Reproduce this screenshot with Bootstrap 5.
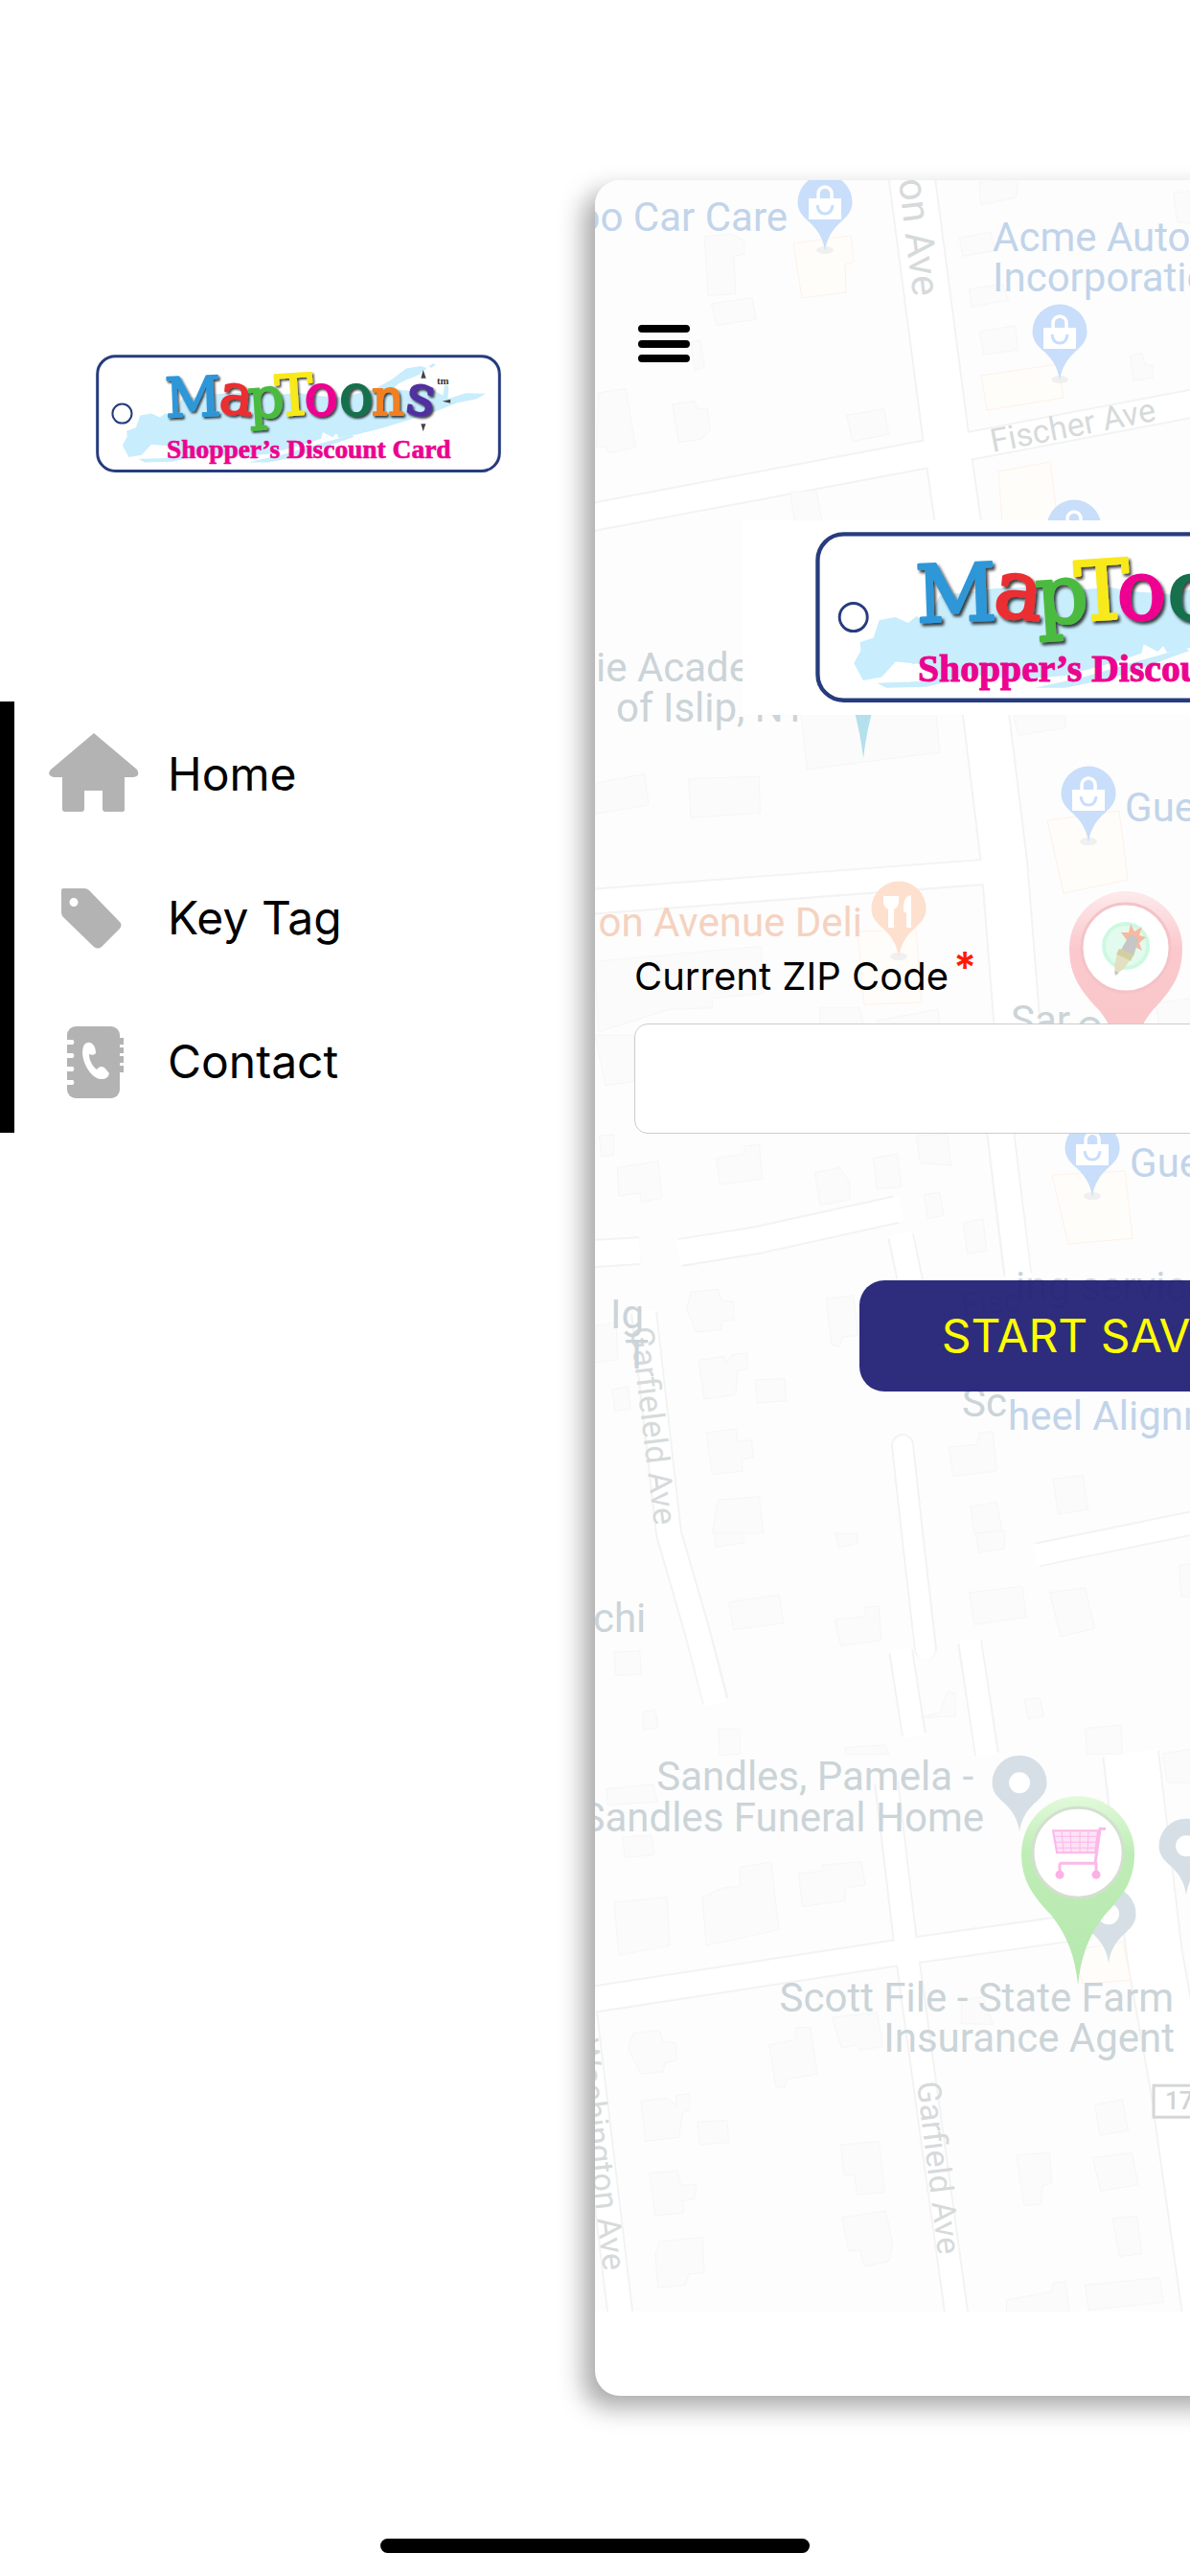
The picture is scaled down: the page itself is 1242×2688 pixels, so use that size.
<!DOCTYPE html>
<html lang="en">
<head>
<meta charset="utf-8">
<meta name="viewport" content="width=device-width, initial-scale=1">
<title>MapToons Shopper's Discount Card</title>
<link href="https://cdn.jsdelivr.net/npm/bootstrap@5.3.0/dist/css/bootstrap.min.css" rel="stylesheet">
<style>
  body { font-family: Inter, "Liberation Sans", sans-serif; color: #000; background: #fff; }
  .shell { padding-top: 188px; }
  .brand { padding: 182px 98px 0 100px; }
  .side-menu { margin-top: 238px; border-left: 15px solid #000; }
  .side-menu a { height: 150px; padding: 2px 0 0 36px; gap: 28px; font-size: 48px; color: #000; }
  .side-menu svg { width: 96px; height: 96px; fill: #b3b3b3; }
  .sheet { width: 86vw; padding: 151px 41px 0; border-radius: 26px; background: #fff; box-shadow: -12px 12px 26px rgba(0,0,0,.34); }
  .sheet-map { top: 0; left: 0; border-radius: 26px 26px 0 0; }
  .burger { margin-left: 4px; width: 54px; height: 39px; }
  .burger span { height: 8px; border-radius: 4px; background: #000; }
  .hero { margin: 165px auto 0; padding-left: 4px; width: 760px; height: 203px; background: #fff; }
  .hero svg { width: 612px; }
  .zip-label { margin-top: 245px; font-size: 40px; line-height: 56px; }
  .zip-label sup { color: #ff1a00; font-size: 44px; font-weight: 600; line-height: 40px; top: -8px; margin-left: -6px; }
  .zip-input { margin-top: 21px; height: 115px; border: 1px solid #ccc; border-radius: 14px; font-size: 40px; }
  .start { margin: 153px auto 0; width: 516px; height: 116px; border-radius: 26px; background: rgba(35,33,118,.95); color: #ff0; font-size: 48px; }
  .start:hover { background: #232176; color: #ff0; }
  .foot { height: 188px; padding-bottom: 24px; }
  .foot span { width: 36%; height: 15px; border-radius: 8px; background: #000; }
  .place { font-family: Roboto, sans-serif; font-size: 42px; }
  .road { font-family: Roboto, sans-serif; font-size: 34px; fill: #d6dada; }
  .road .wide { font-size: 41px; }
  .bl { fill: #c1d4ea; } .gr { fill: #cbd4d8; } .or { fill: #f5d2c0; }
  .bld path { fill: #fbfbfb; stroke: #f6f6f6; vector-effect: non-scaling-stroke; }
  .shop path { fill: #fffdfa; stroke: #fef2e8; vector-effect: non-scaling-stroke; }
</style>
</head>
<body>
<svg width="0" height="0" class="position-absolute" aria-hidden="true">
  <defs>
    <filter id="emboss" x="-10%" y="-10%" width="120%" height="130%">
      <feDropShadow dx="5" dy="6" stdDeviation="3" flood-color="#000" flood-opacity=".75"/>
    </filter>
    <symbol id="keytag" viewBox="62 62 1264 370">
      <rect x="67" y="67" width="1254" height="358" rx="56" fill="#fff" stroke="#263c7e" stroke-width="9"/>
      <path fill="#c8edfc" d="M145 345L160 318L158 300L187 290L200 252L235 246L262 258L280 244L300 260L330 200L450 184L560 180L640 186L700 182L740 190L830 196L930 170L985 140L1030 105L1075 98L1095 104L1070 125L1010 150L985 170L1040 175L1100 165L1145 190L1150 155L1162 160L1160 200L1215 182L1278 184L1250 200L1190 212L1120 240L1040 265L960 290L880 310L820 322L812 308L800 320L770 304L765 324L700 345L600 372L500 380L400 370L350 380L300 372L270 345L235 342L205 375L165 382Z"/>
      <path fill="#c8edfc" d="M195 388L290 384L330 375L360 382L300 396L215 398ZM535 398L640 375L760 340L860 312L868 318L780 350L700 378L600 398ZM1100 98L1115 90L1122 94L1108 104Z"/>
      <path fill="#fff" d="M1015 150L1035 138L1055 160L1030 166ZM240 375Q265 335 295 350T330 375L260 386Z"/>
      <circle cx="144" cy="246" r="30" fill="#fff" stroke="#263c7e" stroke-width="6"/>
      <g filter="url(#emboss)" font-family="'DejaVu Serif', serif" font-size="176" stroke-width="6" stroke-linejoin="round">
        <text x="278" y="254" fill="#2f97d8" stroke="#2f97d8" font-size="170" transform="rotate(-2 360 190)">M</text>
        <text x="448" y="248" fill="#ea2f32" stroke="#ea2f32" transform="rotate(6 500 200)">a</text>
        <text x="538" y="258" fill="#4bbb40" stroke="#4bbb40" transform="rotate(-4 590 220)">p</text>
        <text x="622" y="250" fill="#f8e91a" stroke="#f8e91a" transform="rotate(-4 680 180)">T</text>
        <text x="712" y="250" fill="#ee0290" stroke="#ee0290">o</text>
        <text x="821" y="250" fill="#14704c" stroke="#14704c">o</text>
        <text x="922" y="249" fill="#f08022" stroke="#f08022" font-size="158">n</text>
        <text x="1030" y="250" fill="#5130a0" stroke="#5130a0" transform="rotate(8 1075 205)">s</text>
      </g>
      <path fill="#444" d="M1083 110L1092 136H1076ZM1083 302L1091 278H1076ZM1143 208L1168 202V214Z"/>
      <text x="1126" y="154" font-family="'Liberation Serif', serif" font-size="32" font-weight="700" fill="#333">tm</text>
      <text x="283" y="385" font-family="'Liberation Serif', serif" font-size="82" font-weight="700" fill="#ec0390" stroke="#ec0390" stroke-width="2">Shopper’s Discount Card</text>
    </symbol>
    <path id="drop" d="M0 0C-2 -14 -8 -22 -15 -29C-24 -37 -28.500 -42 -28.500 -51A28.500 28.500 0 0 1 28.500 -51C28.500 -42 24 -37 15 -29C8 -22 2 -14 0 0Z"/>
    <g id="bagpin">
      <ellipse cy="-1" rx="9" ry="4" fill="#f0f0f0"/>
      <use href="#drop" fill="#c8defa"/>
      <path fill="#fff" d="M-17 -55H17V-33H-17Z"/>
      <path fill="none" stroke="#fff" stroke-width="3.500" d="M-7 -54V-60A7 7 0 0 1 7 -60V-54"/>
      <path fill="none" stroke="#c8defa" stroke-width="3" d="M-8 -48Q-7 -39 0 -39T8 -48"/>
    </g>
    <g id="dotpin"><use href="#drop" fill="#d6dfe6"/><circle cy="-51" r="11" fill="#fff"/></g>
    <path id="bigdrop" d="M0 0C-3 -28 -10 -50 -28 -73C-46 -92 -59 -108 -59 -137A59 60 0 0 1 59 -137C59 -108 46 -92 28 -73C10 -50 3 -28 0 0Z"/>
    <linearGradient id="redG" x2="0" y2="1"><stop offset="0" stop-color="#fdeaec"/><stop offset=".3" stop-color="#fbc9cd"/><stop offset="1" stop-color="#f8c5c8"/></linearGradient>
    <linearGradient id="greenG" x2="0" y2="1"><stop offset="0" stop-color="#e2fadb"/><stop offset=".3" stop-color="#beedb6"/><stop offset="1" stop-color="#b6e8ae"/></linearGradient>
  </defs>
</svg>

<div class="d-flex flex-column min-vh-100 overflow-hidden">
  <div class="shell d-flex flex-grow-1">
    <aside class="w-50 flex-shrink-0">
      <div class="brand"><svg class="d-block w-100" viewBox="0 0 1264 370" role="img" aria-label="MapToons"><use href="#keytag" width="1264" height="370"/></svg></div>
      <nav class="side-menu">
        <a href="#home" class="d-flex align-items-center text-decoration-none">
          <svg viewBox="0 0 96 96"><path d="M47 5L92 43Q96 50 88 51H79V85Q79 87 76 87H59Q56 87 56 84V65H37V84Q37 87 34 87H17Q14 87 14 84V51H5Q-3 49 2 43Z"/></svg>
          <span>Home</span></a>
        <a href="#key-tag" class="d-flex align-items-center text-decoration-none">
          <svg viewBox="0 0 96 96"><path fill-rule="evenodd" d="M15 17H37Q40 17 42 19L74 52Q77 55 74 59L55 78Q51 81 47 78L15 47Q13 45 13 42V19Q13 17 15 17ZM26 27A4.500 4.500 0 1 0 26 36A4.500 4.500 0 1 0 26 27Z"/></svg>
          <span>Key Tag</span></a>
        <a href="#contact" class="d-flex align-items-center text-decoration-none">
          <svg viewBox="0 0 96 96"><rect x="19" y="11" width="55" height="75" rx="9"/><path d="M74 23H78V30H74ZM74 33H78V39H74ZM74 42H78V49H74ZM74 52H78V59H74Z"/><g fill="#fff"><path d="M18 25H25A3 3 0 0 1 25 30H18ZM18 39H25A3 3 0 0 1 25 44H18ZM18 53H25A3 3 0 0 1 25 58H18ZM18 67H25A3 3 0 0 1 25 72H18Z"/><path d="M37 30C42 25 49 29 49 39Q47 42 42 40C42 47 46 53 50 56Q53 51 58 54L63 60Q62 66 55 66C44 67 30 43 37 30Z"/></g></svg>
          <span>Contact</span></a>
      </nav>
    </aside>

    <main class="sheet position-relative flex-shrink-0">
      <svg class="sheet-map position-absolute w-100" viewBox="621 188 1068 2224" aria-hidden="true">
        <rect x="621" y="188" width="1068" height="2224" fill="#fdfdfd"/>
        <g id="streets" fill="none" stroke="#f3f3f3">
          <path stroke-width="50" d="M951 180L989 470L1029 746L1048 900L1062 1075"/>
          <path stroke-width="31" d="M600 543L987 470L1260 418"/>
          <path stroke-width="28" d="M600 942L1040 909"/>
          <path stroke-width="30" d="M600 1309L668 1305M710 1307L790 1294L935 1262"/>
          <path stroke-width="30" d="M1044 1180L1062 1330"/>
          <path stroke-width="28" d="M672 1370L698 1600L727 1700L747 1775M940 1290L952 1345"/>
          <path stroke-width="24" stroke-linecap="round" d="M942 1508L952 1600L966 1720"/>
          <path stroke-width="26" d="M940 1723L954 1810M1012 1713L1030 1830M1083 1622L1260 1586"/>
          <path stroke-width="26" d="M925 1860L946 2035L999 2420"/>
          <path stroke-width="29" d="M600 2089L946 2036L1130 2010"/>
          <path stroke-width="60" d="M1180 1830L1205 2040L1230 2180L1264 2420"/>
          <path stroke-width="28" d="M610 2100L648 2420"/>
        </g>
        <g fill="none" stroke="#fff">
          <path stroke-width="46" d="M951 180L989 470L1029 746L1048 900L1062 1075"/>
          <path stroke-width="27" d="M600 543L987 470L1260 418"/>
          <path stroke-width="24" d="M600 942L1050 908"/>
          <path stroke-width="26" d="M600 1309L668 1305M708 1307L790 1294L940 1261"/>
          <path stroke-width="26" d="M1044 1180L1063 1334"/>
          <path stroke-width="24" d="M672 1368L698 1600L727 1700L747 1778M940 1288L952 1347"/>
          <path stroke-width="20" stroke-linecap="round" d="M942 1508L952 1600L966 1722"/>
          <path stroke-width="22" d="M940 1721L954 1812M1012 1711L1030 1832M1080 1623L1260 1586"/>
          <path stroke-width="22" d="M925 1858L946 2035L999 2420"/>
          <path stroke-width="25" d="M600 2089L946 2036L1132 2010"/>
          <path stroke-width="56" d="M1180 1828L1205 2040L1230 2180L1264 2420"/>
          <path stroke-width="24" d="M610 2100L648 2420"/>
        </g>
        <!-- building outlines, grouped by map tile -->
        <g class="bld" transform="translate(600 170) scale(.4095 .3333)">
          <path d="M330 230L400 222L432 245V285L405 292L410 410L340 416ZM348 440L452 422L462 490L360 508ZM60 720L130 706L155 890L88 908L80 888L55 890ZM248 756L305 745L310 768L338 770L345 835L322 865L265 875ZM692 790L788 770L800 850L708 872ZM1030 60L1130 50L1125 108L1035 132ZM980 235L1060 215L1070 275L988 292ZM1004 395L1090 380L1105 430L1012 450ZM1032 528L1122 510L1130 585L1042 600ZM1415 605L1445 595L1452 630L1472 635V672L1425 682ZM1525 95L1568 88V190L1535 186ZM548 1030L615 1025L630 1120H560ZM296 560L320 555L330 640L305 650Z"/>
        </g>
        <g class="bld" transform="translate(600 740) scale(.4095 .3333)">
          <path d="M570 -40L915 -60L930 135L592 188ZM51 232L178 203L188 300L51 328ZM290 218L470 210L472 325L295 340ZM1118 20H1250V58L1130 82ZM51 790L475 742L480 890L350 905V935L240 940L60 1010ZM625 935H725L735 985H625ZM768 975L925 940L930 985H770ZM1480 920L1568 905V1000H1490ZM51 1020H150V1165L78 1178Z"/>
        </g>
        <g class="bld" transform="translate(600 1180) scale(.4095 .3333)">
          <path d="M62 15L100 12V75L68 80ZM108 115L212 95L222 210L170 222L165 195L112 204ZM360 85L432 72V48L470 42L478 150L370 168ZM612 130L675 115L700 160V215L625 232ZM760 85L822 72L832 175L770 182ZM870 15L950 10L958 108L880 100ZM890 200L930 192L940 265L900 275ZM990 288L1040 275L1050 375L1000 385ZM295 505L365 495L372 530L405 535V590L375 595L372 622L310 630L285 560ZM640 525L710 515L722 640L680 645L675 675L655 670ZM315 718L380 705L385 730L400 700L440 695V745L415 750L410 825L330 840ZM460 780L535 775L538 845L465 852ZM95 810L135 800L142 870L102 878ZM51 610L105 600L110 715L51 725ZM335 945L410 932L415 972L450 968L455 1020L425 1030L428 1065L350 1075ZM365 1155L470 1145L480 1260H350ZM952 990L1025 982L1030 945L1065 940L1075 1065L965 1080ZM1218 1090L1295 1078L1308 1185L1232 1200ZM1008 1175L1075 1162L1090 1260H1018Z"/>
        </g>
        <g class="bld" transform="translate(600 1600) scale(.4095 .3333)">
          <path d="M355 0H430V30L360 42ZM665 0H720V30L672 45ZM1022 0L1095 -10V48L1030 60ZM392 215L520 192L532 280L405 302ZM662 270L740 260V230L775 228L780 335L678 352ZM1005 185L1140 165L1150 262L1018 285ZM1210 185L1300 170L1325 298L1238 322ZM1540 100L1568 95V200L1545 195ZM100 370L165 368L170 440L105 445ZM172 560L205 552L212 608L175 615ZM365 612H420V690L370 695ZM1145 520L1185 515L1195 572L1155 580ZM1300 610L1392 600L1395 690H1305ZM1498 690L1568 675V780H1510ZM80 800L200 785L210 840L85 850ZM122 950L195 945L202 1005L128 1015ZM690 670L790 662L800 690L690 692ZM100 1155L235 1138L242 1290L112 1320ZM325 1140L375 1110L420 1105V1045L500 1028L520 1240L335 1290ZM570 1065L630 1058V1038L730 1028L740 1100L690 1110L688 1150L580 1168ZM878 577L970 572V500L950 495L930 560Z"/>
        </g>
        <g class="bld" transform="translate(600 1980) scale(.4095 .3571)">
          <path d="M150 395L215 388L225 420L258 425L260 475L230 482L225 508L168 515L135 440ZM495 430L562 415V380L600 378L618 515L540 530L535 555L512 552ZM655 350L770 335L785 435L725 445L715 430L680 440ZM168 595L235 585L258 608V578L292 572V620L275 628L265 700L180 712ZM312 655L388 650L392 715L318 722ZM190 805L262 798L270 840L310 838L305 880L275 885L278 920L205 930ZM215 1005L325 992L330 1095L290 1100L282 1132L212 1140L205 1040ZM678 722L775 712L790 860L720 868L712 812L685 808ZM680 935L792 915L810 1010L800 1062L740 1078L725 1030L698 1032ZM1325 605L1395 590L1410 680L1338 695ZM1125 752L1210 745L1215 835L1192 842L1188 895L1145 900ZM1320 760L1420 745L1435 838L1340 858ZM1370 938L1432 930L1445 1040L1388 1048ZM1100 1175L1215 1152L1220 1125L1250 1122L1260 1210H1100ZM1300 1132L1490 1110L1500 1182L1310 1205ZM985 300L1040 290L1065 370L985 368Z"/>
        </g>
        <g class="shop">
          <path d="M828 254L888 246L891 273L882 276L883 305L837 311ZM1024 392L1104 380L1110 415L1030 428ZM1042 492L1096 482L1104 545H1046ZM1093 856L1168 846L1177 918L1110 932ZM895 972L956 970L962 1046L902 1048ZM1098 1226L1174 1222L1182 1292L1115 1298ZM1120 2035L1172 2026L1180 2066L1130 2070Z"/>
        </g>

        <g class="road">
          <text class="wide" text-anchor="end" transform="translate(953 310) rotate(83)">on Ave</text>
          <text transform="translate(1036 472) rotate(-11)">Fischer Ave</text>
          <text text-anchor="end" transform="translate(683 1592) rotate(83)">Garfieleld Ave</text>
          <text transform="translate(957 2173) rotate(83)">Garfield Ave</text>
          <text text-anchor="end" transform="translate(630 2370) rotate(83)">Washington Ave</text>
          <text transform="translate(1004 1374) rotate(-6)">Fisc</text>
        </g>
        <g class="place bl">
          <text x="822" y="241" text-anchor="end">oo Car Care</text>
          <text x="1036" y="262">Acme Auto</text>
          <text x="1036" y="304">Incorporation</text>
          <text x="1174" y="857">Guests</text>
          <text x="1179" y="1228">Guests</text>
          <text x="1052" y="1492">heel Alignment</text>
        </g>
        <g class="place gr">
          <text x="622" y="711">ie Academy</text>
          <text x="643" y="753">of Islip, NY</text>
          <text x="1055" y="1079">Sar</text>
          <text x="1123" y="1091">Ot</text>
          <text x="637" y="1386">Ig</text>
          <text x="652" y="1428">T</text>
          <text x="1060" y="1357">ing service</text>
          <text x="1004" y="1478">Sc</text>
          <text x="619" y="1703">chi</text>
          <text x="1016" y="1868" text-anchor="end">Sandles, Pamela -</text>
          <text x="1027" y="1911" text-anchor="end">Sandles Funeral Home</text>
          <text x="1225" y="2099" text-anchor="end">Scott File - State Farm</text>
          <text x="1226" y="2141" text-anchor="end">Insurance Agent</text>
        </g>
        <text class="place or" x="900" y="977" text-anchor="end">on Avenue Deli</text>
        <rect x="1204" y="2176" width="70" height="33" fill="#fff" stroke="#d5d7d7" stroke-width="3"/>
        <text x="1216" y="2201" font-family="Roboto, sans-serif" font-weight="500" font-size="26" fill="#cfd4d4">17</text>

        <use href="#bagpin" x="861" y="262"/>
        <use href="#bagpin" x="1106" y="397"/>
        <use href="#bagpin" x="1121" y="601"/>
        <use href="#bagpin" x="1136" y="879"/>
        <use href="#bagpin" x="1140" y="1249"/>
        <g transform="translate(938 999)">
          <ellipse cy="-1" rx="9" ry="4" fill="#f0f0f0"/>
          <use href="#drop" fill="#fde0ce"/>
          <path fill="#fff" d="M-16 -64H0V-57Q-1 -52 -5 -50V-31H-11V-50Q-15 -52 -16 -57ZM5 -48Q4 -64 13 -65V-31H8V-46Z"/>
        </g>
        <path fill="#b4e0ee" d="M891 740H911Q904 765 901 791Q898 765 891 740Z"/>
        <use href="#dotpin" x="1064" y="1911"/>
        <use href="#dotpin" x="1238" y="1977"/>
        <use href="#dotpin" x="1157" y="2048"/>
        <g transform="translate(1175 1127)">
          <use href="#bigdrop" fill="url(#redG)"/>
          <circle cy="-138" r="46" fill="#fff" stroke="#f3c3c8" stroke-width="3"/>
          <circle cy="-140" r="23" fill="#e2fbee" stroke="#cdf9e0" stroke-width="4"/>
          <path fill="#f8b9a0" d="M5 -163L9 -155L17 -160L14 -151L21 -149L14 -143L17 -135L4 -142L-5 -154L3 -154Z"/>
          <path fill="#c6c6c6" d="M3 -150Q9 -154 13 -146L8 -129L-5 -136Z"/>
          <path fill="#d3cfa0" d="M-7 -137L8 -131L5 -124L-10 -131Z"/>
          <path fill="#e2dfc2" d="M-9 -131L4 -125L-2 -116L-11 -110L-12 -120Z"/>
          <path fill="#c6c6c6" d="M-12 -114L-7 -112L-11 -109Z"/>
        </g>
        <g transform="translate(1125 2071)">
          <use href="#bigdrop" fill="url(#greenG)"/>
          <circle cy="-138" r="47" fill="#fff" stroke="#d3dfcf" stroke-width="3"/>
          <g fill="none" stroke="#fbb8e8" stroke-width="3">
            <path d="M29 -163H23L18 -127M-19 -127H20M-19 -127V-118M19 -127V-118"/>
            <path fill="#fde3f6" stroke-width="2" d="M-26 -161H21L18 -138H-22Z"/>
            <path stroke-width="1" d="M-25 -155H20M-24 -149H19M-23 -143H19M-17 -161L-15 -138M-8 -161L-7 -138M2 -161V-138M11 -161L10 -138"/>
          </g>
          <circle cx="-19" cy="-115" r="4.500" fill="#fdb0e6"/><circle cx="19" cy="-115" r="4.500" fill="#fdb0e6"/>
        </g>
      </svg>

      <div class="position-relative">
        <button type="button" class="burger btn p-0 border-0 d-flex flex-column justify-content-between" aria-label="Menu"><span class="w-100"></span><span class="w-100"></span><span class="w-100"></span></button>
        <div class="hero d-flex align-items-center justify-content-center"><svg viewBox="0 0 1264 370" role="img" aria-label="MapToons"><use href="#keytag" width="1264" height="370"/></svg></div>
        <form>
          <label for="zip" class="zip-label d-block">Current ZIP Code <sup>*</sup></label>
          <input id="zip" type="text" inputmode="numeric" class="zip-input form-control bg-white" required>
          <button type="submit" class="start btn d-block border-0 p-0">START SAVING</button>
        </form>
      </div>
    </main>
  </div>
  <footer class="foot d-flex justify-content-center align-items-end"><span></span></footer>
</div>
<script src="https://cdn.jsdelivr.net/npm/bootstrap@5.3.0/dist/js/bootstrap.bundle.min.js"></script>
</body>
</html>
